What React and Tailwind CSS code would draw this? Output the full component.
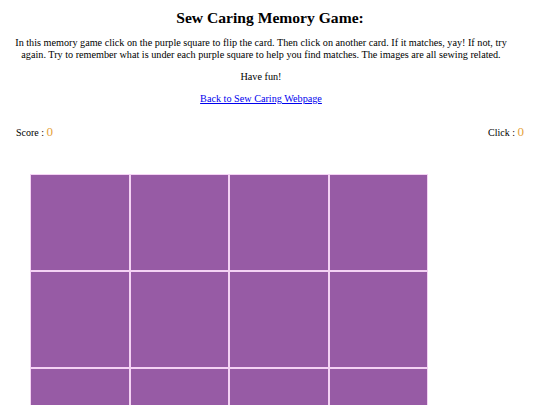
export default function App() {
  const cards = Array.from({ length: 12 });
  return (
    <div className="font-['Liberation_Serif',serif] text-black bg-white w-[540px] h-[405px] overflow-hidden">
      <h1 className="text-center font-bold text-[15.6px] leading-[22px] pt-[7px]">Sew Caring Memory Game:</h1>
      <div className="w-[510px] ml-[6px]">
        <p className="text-center text-[10.2px] leading-[11.5px] mt-[8px]">
          In this memory game click on the purple square to flip the card. Then click on another card. If it matches, yay! If not, try again. Try to remember what is under each purple square to help you find matches. The images are all sewing related.
        </p>
        <p className="text-center text-[10.2px] leading-[11.5px] mt-[11px]">Have fun!</p>
        <p className="text-center text-[10.2px] leading-[11.5px] mt-[10.5px]">
          <a href="#" className="text-[#0000ee] underline">Back to Sew Caring Webpage</a>
        </p>
      </div>
      <div className="flex justify-between items-baseline px-[16px] mt-[19.5px] text-[10px] leading-[16px]">
        <div>Score : <span className="text-[13px] text-[#e5a23a]">0</span></div>
        <div>Click : <span className="text-[13px] text-[#e5a23a]">0</span></div>
      </div>
      <div className="grid grid-cols-4 w-[398px] ml-[30px] mt-[33px]">
        {cards.map((_, i) => (
          <div key={i} className="h-[97px] border border-[#f4d2f4] bg-[#975ba5]" />
        ))}
      </div>
    </div>
  );
}
